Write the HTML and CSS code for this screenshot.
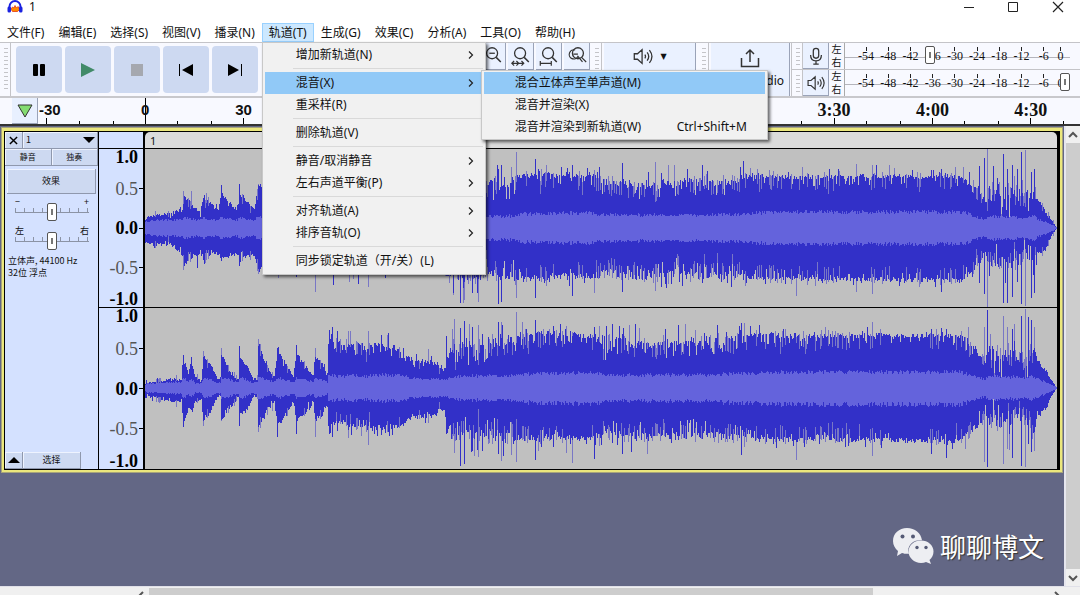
FILE: index.html
```html
<!DOCTYPE html>
<html lang="zh-CN">
<head>
<meta charset="utf-8">
<title>1</title>
<link rel="stylesheet" href="styles.css">
</head>
<body>
<svg class="defs" aria-hidden="true">
  <symbol id="chev" viewBox="0 0 8 10"><path d="M2 1.5 5.5 5 2 8.500" fill="none" stroke="#222" stroke-width="1.2"/></symbol>
  <symbol id="lens" viewBox="0 0 24 24"><circle cx="11" cy="9" r="6" fill="none" stroke="#333" stroke-width="1.4"/><path d="m15.500 13.500 5 5" stroke="#333" stroke-width="1.600"/></symbol>
  <symbol id="speaker" viewBox="0 0 24 20"><path d="M2.500 7v6h3.500l5 4.500v-15L6 7zM14 8q1.500 2 0 4M16.500 5.500q3.500 4.500 0 9M19 3q5.500 7 0 14" fill="none" stroke="#333" stroke-width="1.400"/></symbol>
</svg>

<header class="titlebar">
  <svg class="logo" viewBox="0 0 16 16"><path d="M2.500 10V7.500a5.500 5.500 0 0 1 11 0V10" fill="none" stroke="#1a22e0" stroke-width="2"/><path d="M4 10l1.500-2L7 9l1-2.500L9.500 9 11 7.500l1.500 3-2 2h-5z" fill="#ff8a00" stroke="#e33a10" stroke-width=".8"/><rect x=".5" y="7.500" width="3.500" height="6" rx="1.500" fill="#1a22e0"/><rect x="12" y="7.500" width="3.500" height="6" rx="1.500" fill="#1a22e0"/></svg>
  <h1>1</h1>
  <button aria-label="最小化"><svg viewBox="0 0 12 12"><path d="M1 6.500h10" stroke="#222"/></svg></button>
  <button aria-label="最大化"><svg viewBox="0 0 12 12"><path d="M1.500 1.500h9v9h-9z" fill="none" stroke="#222"/></svg></button>
  <button aria-label="关闭"><svg viewBox="0 0 12 12"><path d="m1 1 10 10M11 1 1 11" stroke="#222" stroke-width="1.200"/></svg></button>
</header>

<nav class="menubar">
  <button>文件(F)</button><button>编辑(E)</button><button>选择(S)</button><button>视图(V)</button><button>播录(N)</button>
  <div class="menu-root">
    <button class="open">轨道(T)</button>
    <div class="popup tracks">
      <button>增加新轨道(N)<svg><use href="#chev"/></svg></button>
      <hr>
      <div class="menu-root">
        <button class="active">混音(X)<svg><use href="#chev"/></svg></button>
        <div class="popup mix">
          <button class="active">混合立体声至单声道(M)</button>
          <button>混音并渲染(X)</button>
          <button>混音并渲染到新轨道(W)<kbd>Ctrl+Shift+M</kbd></button>
        </div>
      </div>
      <button>重采样(R)</button>
      <hr>
      <button>删除轨道(V)</button>
      <hr>
      <button>静音/取消静音<svg><use href="#chev"/></svg></button>
      <button>左右声道平衡(P)<svg><use href="#chev"/></svg></button>
      <hr>
      <button>对齐轨道(A)<svg><use href="#chev"/></svg></button>
      <button>排序音轨(O)<svg><use href="#chev"/></svg></button>
      <hr>
      <button>同步锁定轨道（开/关）(L)</button>
    </div>
  </div>
  <button>生成(G)</button><button>效果(C)</button><button>分析(A)</button><button>工具(O)</button><button>帮助(H)</button>
</nav>

<section class="toolbar">
  <i class="grip"></i>
  <div class="transport">
    <button aria-label="暂停"><svg viewBox="0 0 16 16"><rect x="2" y="2" width="5" height="12" rx="1"/><rect x="9" y="2" width="5" height="12" rx="1"/></svg></button>
    <button aria-label="播放"><svg viewBox="0 0 16 16"><path d="M1 1v14l14-7z" fill="#418a68"/></svg></button>
    <button aria-label="停止"><svg viewBox="0 0 16 16"><path d="M2 2h12v12H2z" fill="#a5a8af"/></svg></button>
    <button aria-label="跳至开头"><svg viewBox="0 0 16 16"><path d="M1 2h1v12H1zM15 2v12L4 8z"/></svg></button>
    <button aria-label="跳至结尾"><svg viewBox="0 0 16 16"><path d="M14 2h1v12h-1zM1 2v12l11-6z"/></svg></button>
  </div>
  <div class="zooms">
    <button aria-label="缩小"><svg viewBox="0 0 24 24"><use href="#lens"/><path d="M8 9h6" stroke="#333" stroke-width="1.400"/></svg></button>
    <button aria-label="适应选区"><svg viewBox="0 0 24 24"><use href="#lens"/><path d="M2 20h13M4.500 17.500 2 20l2.500 2.500M12.500 17.500 15 20l-2.500 2.500M7 17.500 9.500 20 7 22.500" fill="none" stroke="#333" stroke-width="1.300"/></svg></button>
    <button aria-label="适应项目"><svg viewBox="0 0 24 24"><use href="#lens"/><path d="M2.500 20h12M2.500 17.500v5M14.500 17.500v5" stroke="#333" stroke-width="1.300"/></svg></button>
    <button aria-label="缩放切换"><svg viewBox="0 0 24 24"><circle cx="13" cy="9" r="6" fill="none" stroke="#333" stroke-width="1.400"/><path d="m17 13.500 5 5M10 5.500a5 5 0 1 0 3 7l5 6M8 10h5" fill="none" stroke="#333" stroke-width="1.300"/></svg></button>
  </div>
  <i class="grip"></i>
  <button class="setup" aria-label="音频设置"><svg viewBox="0 0 24 20"><use href="#speaker"/></svg><span>▼</span></button>
  <i class="grip"></i>
  <button class="share"><svg viewBox="0 0 20 20"><path d="M1.500 10v8.500h17V10M10 14V2M6 6l4-4 4 4" fill="none" stroke="#333" stroke-width="1.500"/></svg>Share Audio</button>
  <div class="meters">
    <div class="meter">
      <i class="grip"></i>
      <button aria-label="录音电平"><svg viewBox="0 0 20 20"><rect x="7" y="1.500" width="6" height="11" rx="3" fill="none" stroke="#333" stroke-width="1.400"/><path d="M4 9q0 6.500 6 6.500T16 9M10 15.500V19M7 19h6" fill="none" stroke="#333" stroke-width="1.400"/></svg></button>
      <p><span>左</span><span>右</span></p>
      <div class="scale"><b>-54</b><b>-48</b><b>-42</b><b>-36</b><b>-30</b><b>-24</b><b>-18</b><b>-12</b><b>-6</b><b>0</b><input type="range" aria-label="录音音量" value="37"></div>
    </div>
    <div class="meter">
      <i class="grip"></i>
      <button aria-label="播放电平"><svg viewBox="0 0 24 20"><use href="#speaker"/></svg></button>
      <p><span>左</span><span>右</span></p>
      <div class="scale"><b>-54</b><b>-48</b><b>-42</b><b>-36</b><b>-30</b><b>-24</b><b>-18</b><b>-12</b><b>-6</b><b>0</b><input type="range" aria-label="播放音量" value="100"></div>
    </div>
  </div>
</section>

<section class="timeline">
  <button aria-label="固定播放头"><svg viewBox="0 0 16 16"><path d="M1 2h14L8 14z" fill="#84dc72" stroke="#333"/></svg></button>
  <ol><li>-30</li><li class="zero">0</li><li>30</li><li></li><li></li><li></li><li></li><li></li><li class="min">3:30</li><li class="min">4:00</li><li class="min">4:30</li></ol>
</section>

<main class="workspace">
  <div class="canvas">
    <article class="track">
      <aside class="panel">
        <div class="row head"><button aria-label="关闭轨道"><svg viewBox="0 0 10 10"><path d="m1 1 8 8M9 1 1 9" stroke="#000" stroke-width="1.600"/></svg></button><button class="name">1<svg viewBox="0 0 12 6"><path d="M0 0h12L6 6z"/></svg></button></div>
        <div class="row halves"><button>静音</button><button>独奏</button></div>
        <button class="effects">效果</button>
        <div class="slider"><label for="gain">−</label><span>+</span><input id="gain" type="range"></div>
        <div class="slider"><label for="pan">左</label><span>右</span><input id="pan" type="range"></div>
        <p class="info">立体声, 44100 Hz<br>32位 浮点</p>
        <div class="row foot"><button aria-label="折叠"><svg viewBox="0 0 12 6"><path d="M0 6h12L6 0z"/></svg></button><button class="select">选择</button></div>
      </aside>
      <div class="vruler">
        <div class="cap"></div>
        <ul><li class="strong">1.0</li><li>0.5</li><li class="strong mid">0.0</li><li>-0.5</li><li class="strong">-1.0</li></ul>
        <ul><li class="strong">1.0</li><li>0.5</li><li class="strong mid">0.0</li><li>-0.5</li><li class="strong">-1.0</li></ul>
      </div>
      <div class="clip">
        <div class="clip-name">1</div>
        <svg class="wave" id="left" viewBox="145 -79 913 158" preserveAspectRatio="none"></svg>
        <svg class="wave" id="right" viewBox="145 -79 913 158" preserveAspectRatio="none"></svg>
      </div>
    </article>
    <div class="brand">
      <svg viewBox="0 0 42 38"><path d="M15 1C7 1 1 6.500 1 14c0 4 2 7.500 5 10l-1 5 5-3c2 .7 4 1 7 .8a12 10 0 0 1 13-13.500C29 6 23 1 15 1z" fill="#edeef2"/><path d="M29 13.500c-7 0-12.500 4.800-12.500 11S22 36 29 36q3 0 5-1l5 2-1.500-4c2.500-2 4-5 4-8.500 0-6.200-5.500-11-12.500-11z" fill="#edeef2"/><g fill="#555a75"><circle cx="10.500" cy="9.500" r="2"/><circle cx="21" cy="9.500" r="2"/><circle cx="25" cy="20.500" r="1.700"/><circle cx="34" cy="20.500" r="1.700"/></g></svg>
      <span>聊聊博文</span>
    </div>
  </div>
  <div class="vscroll"><button aria-label="向上"><svg viewBox="0 0 10 8"><path d="m1 6 4-4 4 4" fill="none" stroke="#555" stroke-width="2"/></svg></button><i></i><button aria-label="向下"><svg viewBox="0 0 10 8"><path d="m1 2 4 4 4-4" fill="none" stroke="#555" stroke-width="2"/></svg></button></div>
</main>
<footer class="hscroll">
  <button aria-label="向左"><svg viewBox="0 0 8 10"><path d="M6 1 2 5l4 4" fill="none" stroke="#555" stroke-width="2"/></svg></button><i></i><button aria-label="向右"><svg viewBox="0 0 8 10"><path d="m2 1 4 4-4 4" fill="none" stroke="#555" stroke-width="2"/></svg></button>
</footer>
<script src="wave.js"></script>
</body>
</html>
```
FILE: wave.js
```js
// Envelope points: [x, peak above, peak below, rms, roughness]
const body = [
  [488, 46, 46, 12, 16], [514, 46, 50, 12, 16], [518, 52, 50, 14, 8], [560, 54, 49, 15, 8], [590, 51, 50, 15, 8],
  [605, 46, 43, 13, 15], [640, 43, 48, 13, 13], [690, 46, 46, 13, 14], [735, 47, 47, 14, 12],
  [752, 53, 49, 15, 7], [800, 51, 51, 16, 8], [880, 52, 51, 16, 7], [930, 51, 52, 16, 6],
  [962, 51, 52, 16, 8], [972, 44, 42, 13, 10], [980, 34, 34, 10, 10], [986, 26, 25, 9, 8],
  [991, 42, 35, 12, 22], [1003, 34, 32, 11, 24], [1016, 34, 34, 11, 24], [1026, 28, 28, 10, 22],
  [1035, 40, 42, 12, 14], [1038, 28, 26, 9, 4], [1046, 17, 22, 6, 3], [1052, 8, 8, 3, 1], [1057, 1, 1, 1, 0]
];
const leftEnv = [
  [145, 10, 15, 6, 3], [156, 13, 16, 8, 4], [170, 14, 17, 8, 5], [182, 19, 26, 9, 5], [184, 32, 38, 10, 5],
  [190, 24, 30, 9, 5], [200, 16, 26, 8, 4], [203, 32, 34, 10, 5], [210, 25, 26, 9, 4], [218, 18, 27, 8, 3],
  [221, 36, 30, 10, 4], [228, 26, 29, 9, 4], [236, 18, 25, 8, 3], [240, 33, 30, 10, 5], [254, 20, 27, 8, 4],
  [258, 43, 44, 11, 5], [270, 30, 32, 9, 5], [330, 48, 40, 12, 8], [440, 35, 35, 9, 8], [450, 45, 48, 11, 20], ...body
];
const rightEnv = [
  [145, 6, 9, 4, 3], [162, 7, 11, 5, 3], [172, 9, 14, 6, 3], [181, 9, 13, 6, 2], [183, 30, 34, 10, 4],
  [188, 15, 20, 7, 4], [191, 27, 22, 9, 4], [195, 11, 13, 5, 3], [201, 8, 11, 5, 2], [203, 32, 33, 10, 4],
  [211, 23, 22, 8, 4], [217, 9, 9, 5, 2], [220, 9, 9, 5, 2], [221, 34, 31, 10, 4], [230, 15, 18, 8, 4],
  [238, 9, 10, 5, 2], [239, 32, 28, 10, 4], [247, 21, 20, 8, 4], [253, 9, 9, 5, 2], [257, 10, 9, 6, 2],
  [258, 45, 40, 11, 6], [266, 22, 22, 8, 5], [274, 11, 14, 6, 3], [277, 37, 34, 10, 5], [286, 23, 24, 8, 5],
  [293, 11, 13, 6, 3], [296, 36, 32, 10, 5], [306, 20, 22, 8, 5], [313, 12, 14, 6, 3], [315, 32, 33, 10, 5],
  [322, 24, 24, 8, 4], [327, 13, 17, 6, 3], [328, 49, 35, 12, 8], [336, 49, 32, 12, 10], [342, 40, 32, 11, 7],
  [350, 45, 36, 13, 9], [365, 40, 38, 12, 9], [378, 44, 40, 13, 6], [390, 42, 38, 13, 9], [402, 38, 36, 13, 8],
  [410, 29, 30, 10, 8], [422, 27, 27, 9, 7], [436, 25, 27, 9, 7], [444, 19, 20, 8, 4],
  [450, 40, 46, 11, 16], [466, 44, 46, 12, 18], [486, 43, 46, 12, 17], ...body
];
// Transients: [x, above, below]
const leftHits = [[183,37,42],[191,37,31],[197,17,40],[221,43,33],[239,44,38],[258,44,46],[278,40,50],[296,46,49],[315,50,64],[333,50,57],[349,50,54],[358,50,56],[368,50,59],[385,50,50],
  [453,60,67],[460,60,75],[463,60,75],[472,60,65],[478,60,74],[498,59,76],[501,63,74],[516,76,70],[535,69,70],[572,63,68],[594,58,65],[599,61,50],[623,65,64],[656,66,63],[703,63,55],[744,67,52],[751,60,48],[797,48,68],[803,61,52],
  [857,64,64],[873,63,66],[877,63,50],[895,60,51],[942,59,64],[980,62,55],[985,70,66],[988,79,79],[1004,74,75],[1008,59,75],[1013,63,69],[1018,59,54],[1022,76,76],[1026,78,78],[1032,56,70],[1035,59,65]];
const rightHits = [[183,33,38],[203,37,37],[221,40,32],[239,42,37],[258,48,43],[277,40,48],[296,43,45],[315,40,48],[329,57,45],[332,60,48],[337,56,42],[348,56,49],[368,56,56],[381,52,46],[388,54,43],[428,39,34],
  [446,51,45],[452,58,50],[454,68,64],[460,59,77],[464,66,75],[472,60,62],[478,62,68],[482,53,62],[488,49,55],[498,65,65],[501,65,72],[511,50,66],[516,75,73],[535,67,71],[553,61,58],[566,61,64],[572,55,74],[594,60,70],[599,61,57],[613,63,54],[623,53,65],[636,63,50],[648,46,65],[742,64,66],[745,64,58],[760,62,53],
  [797,50,71],[826,60,53],[873,65,67],[932,58,65],[947,58,69],[985,60,73],[988,77,78],[1004,71,75],[1008,60,60],[1013,58,69],[1022,71,77],[1026,78,78],[1029,70,55],[1032,67,63],[1035,60,62]];

function draw(id, env, hits, seed) {
  const random = () => (seed = (seed * 16807) % 2147483647) / 2147483647;
  const peaks = new Map(hits.map(h => [h[0], h]));
  let solid = '', soft = '', rms = '', k = 0;
  for (let x = 145; x < 1058; x++) {
    while (k < env.length - 2 && env[k + 1][0] <= x) k++;
    const a = env[k], b = env[k + 1], t = Math.min(1, (x - a[0]) / (b[0] - a[0]));
    const [up, down, r, rough] = [1, 2, 3, 4].map(i => a[i] + (b[i] - a[i]) * t);
    const jitter = () => {
      const n = random();
      return n > .9 ? rough * random() * 1.2 : n < .2 ? -rough * random() * 1.2 : (random() - .5) * rough * .7;
    };
    const u = Math.max(1, up + jitter()), d = Math.max(1, down + jitter());
    const hit = peaks.get(x);
    const column = (top, bottom) => `M${x} ${Math.round(-top)}h1V${Math.round(bottom)}h-1z`;
    const pale = random() < rough / 55;
    solid += pale ? column(u * .78, d * .78) : column(u, d);
    if (pale) soft += column(u + 3, d + 3);
    if (hit) {
      if (random() < .55) solid += column(hit[1], hit[2]);
      else soft += column(hit[1], hit[2]);
    }
    const q = Math.max(.5, r + (random() - .5) * Math.min(4, r * .3));
    rms += column(q, q);
  }
  document.getElementById(id).innerHTML =
    `<path class="soft" d="${soft}"/><path class="peak" d="${solid}"/><path class="rms" d="${rms}"/>`;
}
draw('left', leftEnv, leftHits, 4711);
draw('right', rightEnv, rightHits, 9203);
```
FILE: styles.css
```css
* { box-sizing: border-box; }
body { margin: 0; height: 100vh; display: flex; flex-direction: column; overflow: hidden; background: #fff; color: #111; font: 12px/16px "Noto Sans", "Noto Sans CJK SC", sans-serif; }
button { margin: 0; padding: 0; border: 0; background: none; color: inherit; font: inherit; display: flex; align-items: center; justify-content: center; white-space: nowrap; }
p, h1, ol, ul { margin: 0; padding: 0; list-style: none; }
svg { display: block; flex: none; }
.defs { position: absolute; width: 0; height: 0; }

.titlebar { height: 20px; flex: none; display: flex; align-items: center; padding: 0 0 6px 7px; }
.titlebar h1 { flex: 1; margin-left: 6px; font-size: 12px; font-weight: 400; }
.titlebar button { width: 44px; }
.titlebar button:last-child { width: 45px; }
.titlebar button svg { width: 12px; height: 12px; }
.logo { width: 16px; height: 16px; }

.menubar { height: 22px; flex: none; display: flex; }
.menubar > button, .menubar > .menu-root > button { height: 19px; margin-top: 3px; padding: 0 6px; border: 1px solid transparent; }
.menubar > .menu-root > .open { background: #cce8ff; border-color: #99d1ff; }
.menu-root { position: relative; }
.popup { position: absolute; z-index: 5; background: #f1f1f1; border: 1px solid #c8c8c8; box-shadow: 2px 2px 3px rgba(0, 0, 0, .6); }
.popup button { width: 100%; height: 22px; justify-content: flex-start; padding-left: 31px; }
.popup button svg { width: 8px; height: 10px; margin: 0 5px 0 auto; }
.popup button.active { background: #91c9f7; }
.popup hr { height: 1px; margin: 2px 0 3px 28px; border: 0; background: #d9d9d9; }
.tracks { left: 0; top: 22px; width: 224px; padding: 1px 2px 2px; }
.tracks button { padding-right: 3px; }
.mix { left: 216px; top: -2px; width: 287px; padding: 1px 2px; }
.popup kbd { margin: 0 15px 0 auto; font: inherit; }

.toolbar { height: 56px; flex: none; display: flex; background: #f8f9ff; border-top: 1px solid #c4c4c8; border-bottom: 2px solid #c8c8cc; }
.grip { flex: none; width: 11px; border-right: 1px solid #c4c4c8; background: repeating-linear-gradient(#c4c4c8 0 1px, transparent 1px 4px) 4px 5px / 4px calc(100% - 9px) no-repeat; }
.transport { display: flex; gap: 3px; padding: 3px 5px 3px 5px; width: 469px; }
.transport button { width: 46px; border-radius: 4px; background: #cdd9f1; }
.transport svg { width: 16px; height: 16px; }
.zooms { display: flex; gap: 2px; height: 27px; padding-right: 1px; }
.zooms button { width: 26px; background: #eaf1ff; border-right: 1px solid #9aa3b8; border-bottom: 1px solid #9aa3b8; }
.zooms svg { width: 22px; height: 22px; }
.setup { width: 92px; height: 27px; margin: 0 2px; gap: 6px; background: #eaf1ff; border-right: 1px solid #9aa3b8; }
.setup svg { width: 22px; height: 19px; }
.setup span { font: 8px "DejaVu Sans", sans-serif; }
.share { width: 79px; margin-left: 2px; padding-top: 5px; flex-direction: column; justify-content: flex-start; gap: 5px; background: #eaf1ff; border-right: 1px solid #9aa3b8; }
.share svg { width: 20px; height: 20px; }
.meters { flex: 1; display: grid; grid-template-rows: 1fr 1fr; margin-left: 1px; border-left: 1px solid #c4c4c8; }
.meter { display: flex; }
.meter + .meter { border-top: 1px solid #c4c4c8; }
.meter button { width: 26px; background: #eaf1ff; border-right: 1px solid #9aa3b8; border-bottom: 1px solid #9aa3b8; }
.meter button svg { width: 20px; height: 18px; }
.meter p { width: 15px; display: flex; flex-direction: column; align-items: center; font-size: 10px; line-height: 13px; }
.scale { flex: 1; position: relative; display: flex; margin-right: 10px; padding: 0 4px 0 10px; border-left: 1px solid #aaa; background: linear-gradient(#b5b5bc, #b5b5bc) 0 14px / 100% 1px no-repeat; }
.scale b { flex: 2; width: 0; display: flex; justify-content: center; padding-top: 6px; font: 12px/14px "Liberation Serif", serif; background: linear-gradient(#222, #222) 50% 4px / 1px 4px no-repeat; }
.scale b:nth-last-child(2) { flex: 1; }
.scale input { position: absolute; inset: 3px 0 auto; }
input[type=range] { appearance: none; width: 100%; height: 18px; margin: 0; background: none; }
input[type=range]::-webkit-slider-thumb { appearance: none; width: 10px; height: 18px; border: 1px solid #555; border-radius: 2px; background: linear-gradient(#777, #777) 50% 50% / 2px 6px no-repeat, #fff; }

.timeline { height: 28px; flex: none; display: flex; background: #f8f9ff; border-bottom: 2px solid #333; }
.timeline button { width: 26px; margin-left: 12px; background: #e8f0ff; border-right: 1px solid #9aa3b8; border-bottom: 1px solid #9aa3b8; }
.timeline svg { width: 16px; height: 16px; }
.timeline ol { flex: 1; display: flex; }
.timeline li { flex: 1; width: 0; text-align: center; font: bold 15px/24px "Liberation Sans", sans-serif; background: linear-gradient(#000, #000) 50% 100% / 1px 6px no-repeat, linear-gradient(#000, #000) 17% 100% / 1px 3px no-repeat, linear-gradient(#000, #000) 83% 100% / 1px 3px no-repeat; }
.timeline li:first-child { flex: 0 0 58px; padding-left: 1px; text-align: left; background-position: 8px 100%, 41px 100%, 41px 100%; }
.timeline .zero { background-size: 1px 100%, 1px 3px, 1px 3px; }
.timeline .min { font: bold 18px/24px "Liberation Serif", serif; }

.workspace { flex: 1; min-height: 0; display: flex; }
.canvas { flex: 1; position: relative; padding: 1px 1px 0; background: #636785; }
.track { height: 346px; display: grid; grid-template-columns: 94px 46px 1fr; border: 3px solid #ebe77c; border-top-width: 4px; outline: 1px solid #a7a47c; outline-offset: -1px; background: #000; padding: 1px 3px 1px 1px; }
.panel { display: flex; flex-direction: column; margin-right: 1px; background: #d4e1ff; font: 9px/12px "Noto Sans CJK SC", sans-serif; }
.row { display: flex; height: 17px; }
.row button, .effects { background: #cdd9f1; border: solid #8f98ad; border-width: 0 1px 1px 0; box-shadow: inset 1px 1px #eef3ff; }
.head button:first-child, .foot button:first-child { width: 18px; }
.head svg { width: 9px; height: 9px; }
.head .name { flex: 1; justify-content: space-between; padding: 0 2px 0 3px; font-size: 9px; }
.name svg, .foot svg { width: 12px; height: 6px; }
.halves button { flex: 1; font-size: 8px; }
.effects { height: 25px; margin: 3px 2px; }
.slider { display: grid; grid-template-columns: 1fr 1fr; grid-template-rows: 6px 18px; margin: 0 9px 5px 10px; }
.slider label, .slider span { line-height: 9px; }
.slider span { text-align: right; }
.slider input { grid-column: 1 / 3; background: linear-gradient(#8b93a5, #8b93a5) 0 9px / 100% 1px no-repeat, repeating-linear-gradient(90deg, #8b93a5 0 1px, transparent 1px 9px) 0 5px / 100% 4px no-repeat; }
.info { padding-left: 3px; white-space: nowrap; font-size: 9px; }
.foot { margin-top: auto; }
.foot .select { width: 58px; }

.vruler { display: grid; grid-template-rows: 16px 158fr 160fr; gap: 1px; margin-right: 2px; }
.cap, .vruler ul { background: #d4e1ff; }
.vruler ul { display: flex; flex-direction: column; justify-content: space-between; font: 18px/16px "Liberation Serif", serif; color: #555; text-align: right; }
.vruler li { padding-right: 5px; background: linear-gradient(#000, #000) 100% 50% / 4px 1px no-repeat; }
.vruler .strong { font-weight: bold; color: #000; }
.vruler .mid { line-height: 32px; }
.vruler li:first-child, .vruler li:last-child { background: none; }
.clip { min-width: 0; display: grid; grid-template-rows: 16px minmax(0, 158fr) minmax(0, 160fr); gap: 1px; }
.clip-name { padding-left: 5px; background: #dbdbdb; border-radius: 5px 5px 0 0; font: 11px/17px "Noto Sans", sans-serif; }
.wave { width: 100%; height: 100%; min-height: 0; background: #c0c0c0; shape-rendering: crispEdges; }
.soft { fill: #7977c5; }
.peak { fill: #3230c8; }
.rms { fill: #6463dc; }

.brand { position: absolute; right: 20px; bottom: 21px; display: flex; align-items: center; gap: 6px; color: #fff; font: 26px/38px "Noto Sans CJK SC", sans-serif; text-shadow: 1px 1px 1px #333; }
.brand svg { width: 42px; height: 38px; }

.vscroll { width: 16px; display: flex; flex-direction: column; border-left: 2px solid #e6e6ee; background: #f0f0f0; }
.vscroll i { flex: 1; background: #cdcdcd; }
.vscroll button { height: 17px; }
.vscroll svg { width: 10px; height: 8px; }
.hscroll { height: 9px; flex: none; display: flex; overflow: hidden; background: #f0f0f0; border-top: 1px solid #e0e0e8; }
.hscroll i { flex: 0 0 67%; margin-top: 1px; background: #cdcdcd; }
.hscroll button { width: 149px; align-items: flex-start; justify-content: flex-end; padding: 4px 4px 0 0; }
.hscroll button:last-child { width: auto; flex: 1; padding-right: 19px; }
.hscroll svg { width: 8px; height: 10px; }
```
